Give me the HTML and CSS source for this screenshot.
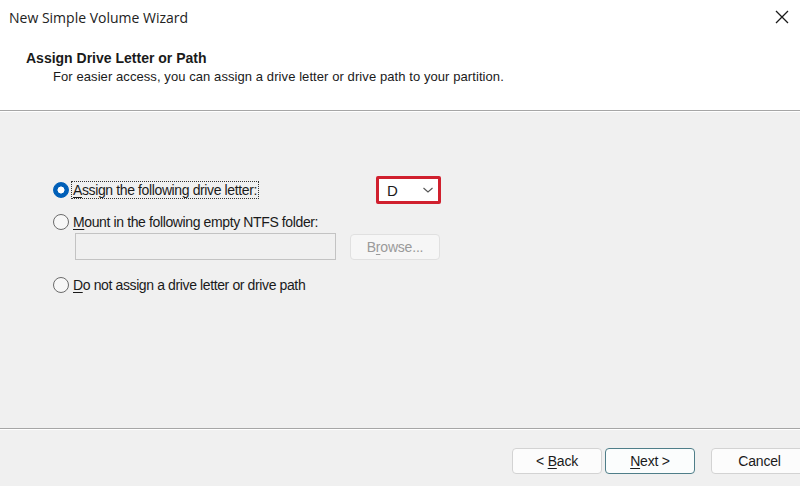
FILE: index.html
```html
<!DOCTYPE html>
<html>
<head>
<meta charset="utf-8">
<link rel="stylesheet" href="styles.css">
</head>
<body>
<div class="dialog">
  <div class="header">
    <div class="titlebar">
      <span class="title">New Simple Volume Wizard</span>
      <svg class="close" width="14" height="14" viewBox="0 0 14 14"><path d="M1 1L13 13M13 1L1 13" stroke="#1a1a1a" stroke-width="1.3" fill="none"/></svg>
    </div>
    <div class="heading">Assign Drive Letter or Path</div>
    <div class="subtitle">For easier access, you can assign a drive letter or drive path to your partition.</div>
  </div>
  <div class="content">
    <div class="row row1">
      <div class="opt">
        <span class="radio checked"></span>
        <span class="label focus"><u>A</u>ssign the following drive letter:</span>
      </div>
      <div class="combo"><span>D</span><svg width="12" height="8" viewBox="0 0 12 8"><path d="M1.5 2L6 6L10.5 2" stroke="#555" stroke-width="1.1" fill="none"/></svg></div>
    </div>
    <div class="row row2">
      <div class="opt">
        <span class="radio"></span>
        <span class="label"><u>M</u>ount in the following empty NTFS folder:</span>
      </div>
    </div>
    <div class="row row-path">
      <div class="textbox"></div>
      <div class="btn disabled"><span>B<u>r</u>owse...</span></div>
    </div>
    <div class="row row3">
      <div class="opt">
        <span class="radio"></span>
        <span class="label"><u>D</u>o not assign a drive letter or drive path</span>
      </div>
    </div>
  </div>
  <div class="footer">
    <div class="btn back"><span>&lt; <u>B</u>ack</span></div>
    <div class="btn next"><span><u>N</u>ext &gt;</span></div>
    <div class="btn cancel"><span>Cancel</span></div>
  </div>
</div>
</body>
</html>
```
FILE: styles.css
```css
html, body { margin: 0; padding: 0; }
body {
  width: 800px;
  height: 486px;
  overflow: hidden;
  font-family: "Liberation Sans", Arial, sans-serif;
  color: #1a1a1a;
  background: #f0f0f0;
}
.dialog {
  width: 800px;
  height: 486px;
  display: flex;
  flex-direction: column;
  overflow: hidden;
}
.header {
  height: 110px;
  background: #ffffff;
  border-bottom: 1px solid #a6a6a6;
  box-shadow: 0 1px 0 #ffffff;
  display: flex;
  flex-direction: column;
  flex-shrink: 0;
}
.titlebar {
  height: 36px;
  display: flex;
  align-items: center;
  justify-content: space-between;
  padding: 0 11px 0 9px;
}
.title {
  font-family: "Open Sans", "Noto Sans", sans-serif;
  font-size: 14px;
  color: #222;
  margin-top: -1px;
}
.close { margin-top: -2px; }
.heading {
  font-weight: bold;
  font-size: 14px;
  padding-left: 26px;
  margin-top: 14px;
  line-height: 17px;
}
.subtitle {
  font-size: 13px;
  padding-left: 53px;
  line-height: 17px;
  margin-top: 1px;
  color: #1a1a1a;
  letter-spacing: 0.08px;
}
.content {
  flex: 1;
  padding: 64px 0 0 53px;
  margin-top: 1px;
}
.row { display: flex; align-items: center; }
.row1 { height: 28px; }
.row2 { height: 18px; margin-top: 9px; }
.row-path { margin-top: 2px; padding-left: 22px; height: 27px; }
.row3 { height: 18px; margin-top: 16px; }
.opt { display: flex; align-items: center; }
.radio {
  width: 14px;
  height: 14px;
  border-radius: 50%;
  border: 1px solid #6b6b6b;
  background: #f7f7f7;
  box-sizing: content-box;
  flex-shrink: 0;
}
.radio.checked {
  border: 1px solid #005fb8;
  background: radial-gradient(circle, #ffffff 0 3.2px, #005fb8 3.8px);
}
.label {
  font-size: 14px;
  margin-left: 2px;
  line-height: 16px;
  padding: 0 1px;
  border: 1px solid transparent;
  letter-spacing: -0.38px;
}
.label.focus { border: 1px dotted #333; }
.combo {
  margin-left: 117px;
  width: 65px;
  height: 28px;
  box-sizing: border-box;
  border: 3px solid #d0202e;
  border-radius: 2px;
  background: #ffffff;
  display: flex;
  align-items: center;
  justify-content: space-between;
  padding: 0 4px 0 8px;
  font-size: 15px;
  color: #1a1a1a;
}
.textbox {
  width: 259px;
  height: 25px;
  border: 1px solid #c3c3c3;
  background: #f0f0f0;
}
.btn {
  height: 24px;
  border: 1px solid #d3d3d3;
  border-radius: 4px;
  background: #fcfcfc;
  display: flex;
  align-items: center;
  justify-content: center;
  font-size: 14px;
  box-sizing: content-box;
  letter-spacing: -0.2px;
  flex-shrink: 0;
}
.btn.disabled {
  margin-left: 14px;
  width: 88px;
  color: #9a9a9a;
  background: #f6f6f6;
  border-color: #e0e0e0;
}
.footer {
  height: 58px;
  flex-shrink: 0;
  border-top: 1px solid #a6a6a6;
  box-shadow: inset 0 1px 0 #ffffff;
  display: flex;
  align-items: flex-start;
  padding: 19px 0 0 512px;
  box-sizing: border-box;
}
.back { width: 88px; }
.next {
  width: 88px;
  margin-left: 3px;
  border: 1.5px solid #4f7e89;
  background: #fbfdfd;
}
.cancel { width: 95px; margin-left: 16px; }
u { text-decoration: underline; text-underline-offset: 2px; }
```
